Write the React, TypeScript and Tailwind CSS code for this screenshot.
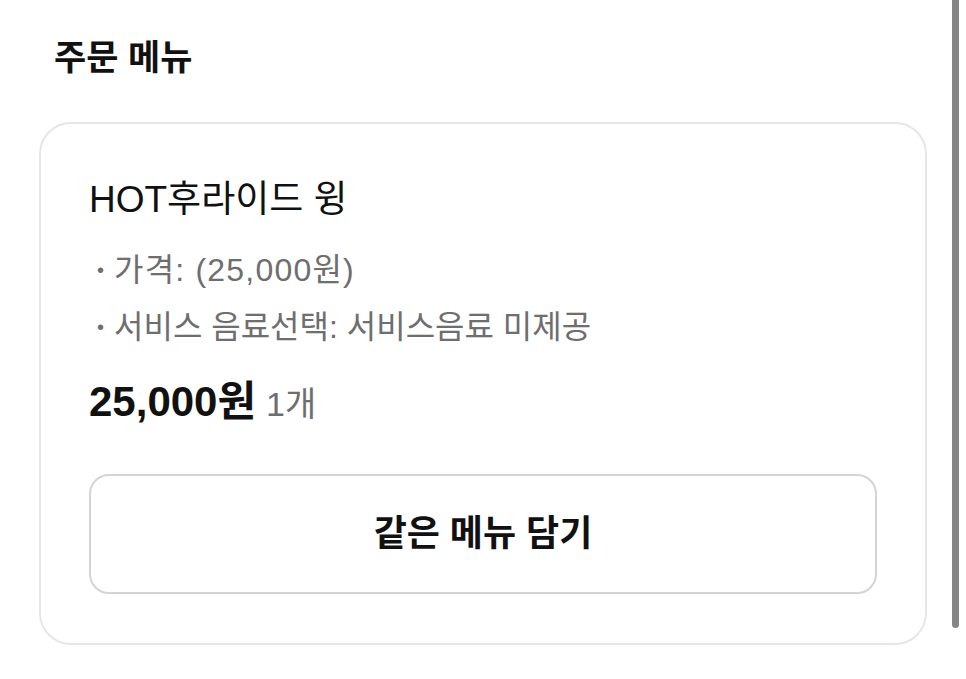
export default function App() {
  const font = "font-['Liberation_Sans','Noto_Sans_CJK_KR',sans-serif]";

  return (
    <div className={`relative min-h-[679px] w-full bg-white ${font}`}>
      {/* overlay scroll indicator */}
      <div className="absolute right-[7px] top-0 h-[628px] w-[7px] rounded-b-full bg-[#858585]" />

      <div className="px-[39px] pt-[38px]">
        <h2 className="pl-[15px] text-[35px] font-bold leading-[40px] text-[#111]">주문 메뉴</h2>

        <div className="mt-[44px] rounded-[32px] border-2 border-[#e6e6e6] px-[48px] pb-[49px] pt-[56px]">
          <p className="text-[37px] leading-[40px] text-[#111]">HOT후라이드 윙</p>

          <ul className="mt-[30px] flex flex-col gap-[17px] text-[32px] leading-[40px] text-[#6e6e6e]">
            <li className="flex items-center gap-[10px] pl-[8px]">
              <span className="text-[20px]">•</span>
              <span className="tracking-[1.2px]">가격: (25,000원)</span>
            </li>
            <li className="flex items-center gap-[10px] pl-[8px]">
              <span className="text-[20px]">•</span>
              <span>서비스 음료선택: 서비스음료 미제공</span>
            </li>
          </ul>

          <p className="mt-[35px] flex items-baseline gap-[10px] leading-[40px]">
            <span className="text-[42px] font-bold text-[#111]">25,000원</span>
            <span className="text-[34px] text-[#6e6e6e]">1개</span>
          </p>

          <button className="mt-[50px] flex h-[120px] w-full items-center justify-center rounded-[20px] border-2 border-[#d4d4d4] bg-white text-[36px] font-bold text-[#111]">
            같은 메뉴 담기
          </button>
        </div>
      </div>
    </div>
  );
}
